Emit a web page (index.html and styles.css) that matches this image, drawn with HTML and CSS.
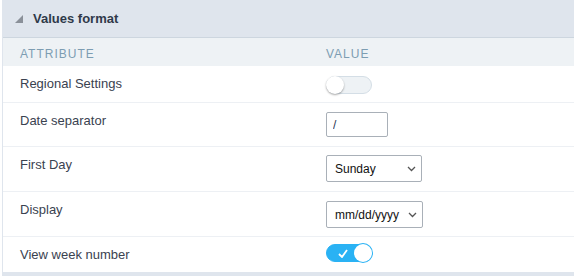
FILE: index.html
```html
<!DOCTYPE html>
<html lang="en">
<head>
    <meta charset="UTF-8">
    <title>Values format</title>
    <link rel="stylesheet" href="styles.css">
</head>
<body>
    <div class="panel">
        <div class="panel-head">
            <svg class="arrow" width="8" height="8" viewBox="0 0 8 8"><polygon points="8,0 8,8 0,8" fill="#8a9099"/></svg>
            <span>Values format</span>
        </div>
        <table class="props">
            <thead>
                <tr>
                    <th class="col-attr">Attribute</th>
                    <th>Value</th>
                </tr>
            </thead>
            <tbody>
                <tr class="r1">
                    <td>Regional Settings</td>
                    <td><span class="toggle"><span class="knob"></span></span></td>
                </tr>
                <tr class="r2">
                    <td>Date separator</td>
                    <td><input class="txt" type="text" value="/"></td>
                </tr>
                <tr class="r3">
                    <td>First Day</td>
                    <td><div class="sel sel-day">Sunday<svg width="9" height="6" viewBox="0 0 9 6"><path d="M1 1l3.5 3.5L8 1" fill="none" stroke="#555" stroke-width="1.3"/></svg></div></td>
                </tr>
                <tr class="r4">
                    <td>Display</td>
                    <td><div class="sel sel-fmt">mm/dd/yyyy<svg width="9" height="6" viewBox="0 0 9 6"><path d="M1 1l3.5 3.5L8 1" fill="none" stroke="#555" stroke-width="1.3"/></svg></div></td>
                </tr>
                <tr class="r5">
                    <td>View week number</td>
                    <td><span class="toggle on"><svg class="check" width="10" height="9" viewBox="0 0 10 9"><path d="M1 5l3 3L9 1" fill="none" stroke="#fff" stroke-width="1.8"/></svg><span class="knob"></span></span></td>
                </tr>
            </tbody>
        </table>
        <div class="panel-foot"></div>
    </div>
</body>
</html>
```

FILE: styles.css
```css
body {
    margin: 0;
    font-family: "Liberation Sans", Arial, sans-serif;
    background: #fff;
}
.panel {
    margin-left: 2px;
    border-left: 1px solid #dfe5ed;
}
.panel-head {
    height: 37px;
    background: #dfe5ed;
    border-bottom: 1px solid #cdd6df;
    display: flex;
    align-items: center;
    padding-left: 12px;
    font-size: 13px;
    font-weight: bold;
    color: #2f3a4a;
}
.arrow {
    margin-right: 10px;
    margin-top: 1px;
}
.props {
    width: 100%;
    border-collapse: collapse;
}
.props th {
    height: 25px;
    background: #eef2f5;
    text-align: left;
    font-size: 12px;
    font-weight: normal;
    letter-spacing: 1px;
    text-transform: uppercase;
    color: #7d9db2;
    padding: 3px 0 0 17px;
    vertical-align: middle;
}
.props th.col-attr {
    width: 289px;
}
.props td {
    font-size: 13px;
    color: #3a4250;
    padding: 10px 0 0 17px;
    vertical-align: top;
    border-top: 1px solid #edf0f4;
}
.props tbody tr:first-child td {
    border-top: none;
}
.r1 td { height: 26px; }
.r2 td { height: 33px; }
.r3 td { height: 34px; }
.r4 td { height: 34px; }
.r5 td { height: 25px; }
.r1 td:last-child { padding-top: 10px; }
.r2 td:last-child { padding-top: 9px; }
.r3 td:last-child { padding-top: 8px; }
.r4 td:last-child { padding-top: 9px; }
.r5 td:last-child { padding-top: 7px; }
.toggle {
    position: relative;
    display: block;
    width: 44px;
    height: 16px;
    border: 1px solid #d4dee6;
    border-radius: 9px;
    background: #eef2f5;
}
.toggle .knob {
    position: absolute;
    left: -1px;
    top: -1px;
    width: 18px;
    height: 18px;
    border-radius: 50%;
    background: #fff;
    box-shadow: 0 1px 2px rgba(0, 0, 0, 0.35);
}
.toggle.on {
    background: #2ab2f4;
    border-color: #2ab2f4;
}
.toggle.on .knob {
    left: auto;
    right: -1px;
    box-shadow: 0 0 0 1px #2ab2f4;
}
.check {
    position: absolute;
    left: 11px;
    top: 4px;
}
.txt {
    display: block;
    box-sizing: border-box;
    width: 62px;
    height: 25px;
    border: 1px solid #a9b0b8;
    border-radius: 2px;
    padding: 0 6px;
    font-family: "Liberation Sans", Arial, sans-serif;
    font-size: 12px;
    color: #2a3550;
    margin: 0;
}
.sel {
    box-sizing: border-box;
    height: 27px;
    border: 1px solid #a9b0b8;
    border-radius: 2px;
    display: flex;
    align-items: center;
    justify-content: space-between;
    padding: 0 5px 0 8px;
    font-size: 12px;
    color: #111;
}
.sel-day { width: 96px; }
.sel-fmt { width: 97px; }
.panel-foot {
    height: 4px;
    background: #dfe5ed;
}
```
